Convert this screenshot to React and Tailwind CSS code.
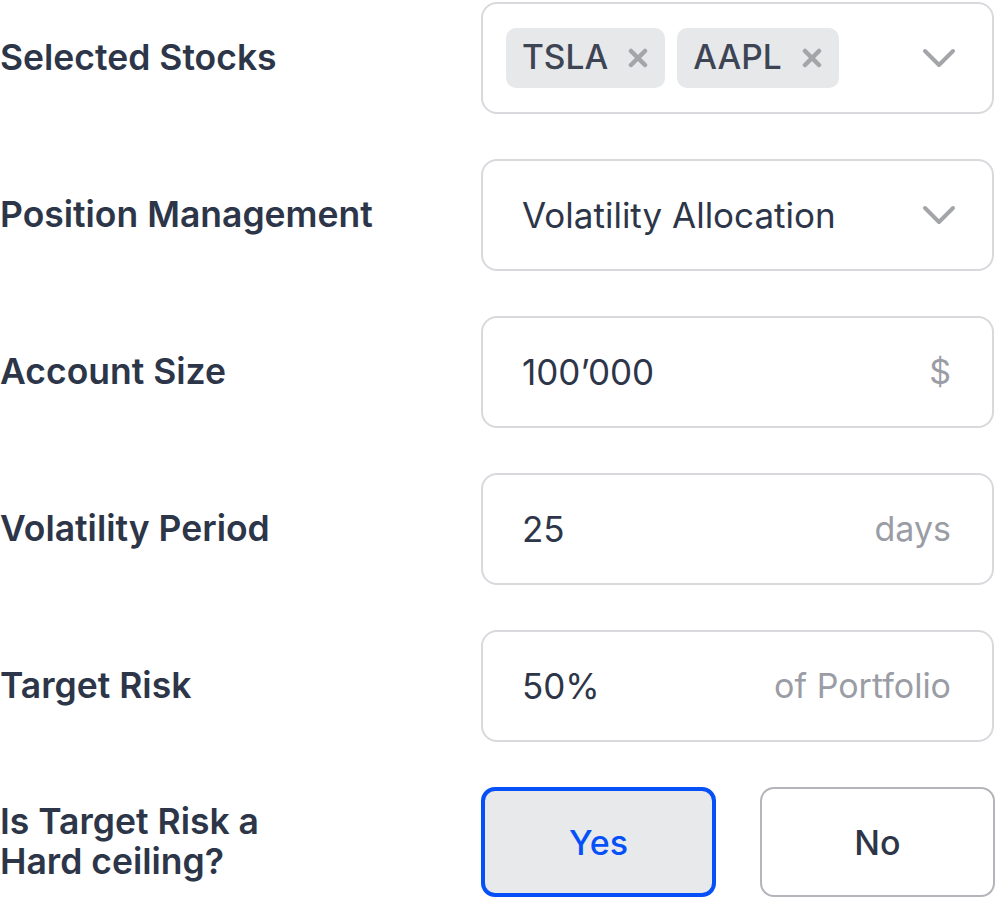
import React, { useState } from 'react';

const font = { fontFamily: 'Inter, "Noto Sans", sans-serif' };

const Chevron = () => (
  <svg width="34" height="20" viewBox="0 0 34 20" fill="none" className="shrink-0">
    <path d="M3 3l14 14L31 3" stroke="#a3a5a8" strokeWidth="4" strokeLinecap="round" strokeLinejoin="round" />
  </svg>
);

const Tag = ({ label }) => (
  <div className="flex items-center h-[60px] pl-4 pr-[17px] gap-[20px] rounded-[10px] bg-[#e7e8ea]">
    <span className="text-[33.5px] font-medium text-[#3d4454] leading-none">{label}</span>
    <svg width="20" height="20" viewBox="0 0 20 20" fill="none">
      <path d="M3 3l14 14M17 3L3 17" stroke="#a3a5a8" strokeWidth="4.5" strokeLinecap="round" />
    </svg>
  </div>
);

const Row = ({ label, children }) => (
  <div className="flex items-center h-[112px]">
    <div className="w-[481px] text-[35.5px] font-semibold text-[#2d3648] leading-[40px]">{label}</div>
    <div className="flex-1">{children}</div>
  </div>
);

const Field = ({ children, className = '' }) => (
  <div className={`flex items-center h-[112px] w-[513px] border-2 border-[#d8d9dd] rounded-[16px] bg-white ${className}`}>
    {children}
  </div>
);

const InputField = ({ value, suffix }) => (
  <Field className="pl-[39px] pr-[41px] justify-between">
    <span className="text-[35px] text-[#2d3648] leading-none">{value}</span>
    <span className="text-[34px] text-[#9a9da5] leading-none">{suffix}</span>
  </Field>
);

const toggleOn = 'w-[235px] h-[110px] rounded-[14px] border-4 border-[#0550f7] bg-[#e8e9eb] text-[34px] font-medium text-[#0550f7]';
const toggleOff = 'w-[235px] h-[110px] rounded-[14px] border-2 border-[#b3b5ba] bg-white text-[34px] font-medium text-[#2d3648]';

export default function App() {
  const [hard, setHard] = useState(true);

  return (
    <div className="w-[996px] h-[899px] bg-white pt-[2px] flex flex-col gap-[45px]" style={font}>
      <Row label="Selected Stocks">
        <Field className="pl-[23px] pr-[36px] justify-between">
          <div className="flex items-center gap-[12px]">
            <Tag label="TSLA" />
            <Tag label="AAPL" />
          </div>
          <Chevron />
        </Field>
      </Row>

      <Row label="Position Management">
        <Field className="pl-[39px] pr-[36px] justify-between">
          <span className="text-[35px] text-[#2d3648] leading-none">Volatility Allocation</span>
          <Chevron />
        </Field>
      </Row>

      <Row label="Account Size">
        <InputField value="100’000" suffix="$" />
      </Row>

      <Row label="Volatility Period">
        <InputField value="25" suffix="days" />
      </Row>

      <Row label="Target Risk">
        <InputField value="50%" suffix="of Portfolio" />
      </Row>

      <div className="flex items-center h-[110px]">
        <div className="w-[481px] text-[35.5px] font-semibold text-[#2d3648] leading-[40px]">
          Is Target Risk a<br />Hard ceiling?
        </div>
        <div className="flex gap-[44px]">
          <button onClick={() => setHard(true)} className={hard ? toggleOn : toggleOff}>
            Yes
          </button>
          <button onClick={() => setHard(false)} className={!hard ? toggleOn : toggleOff}>
            No
          </button>
        </div>
      </div>
    </div>
  );
}
